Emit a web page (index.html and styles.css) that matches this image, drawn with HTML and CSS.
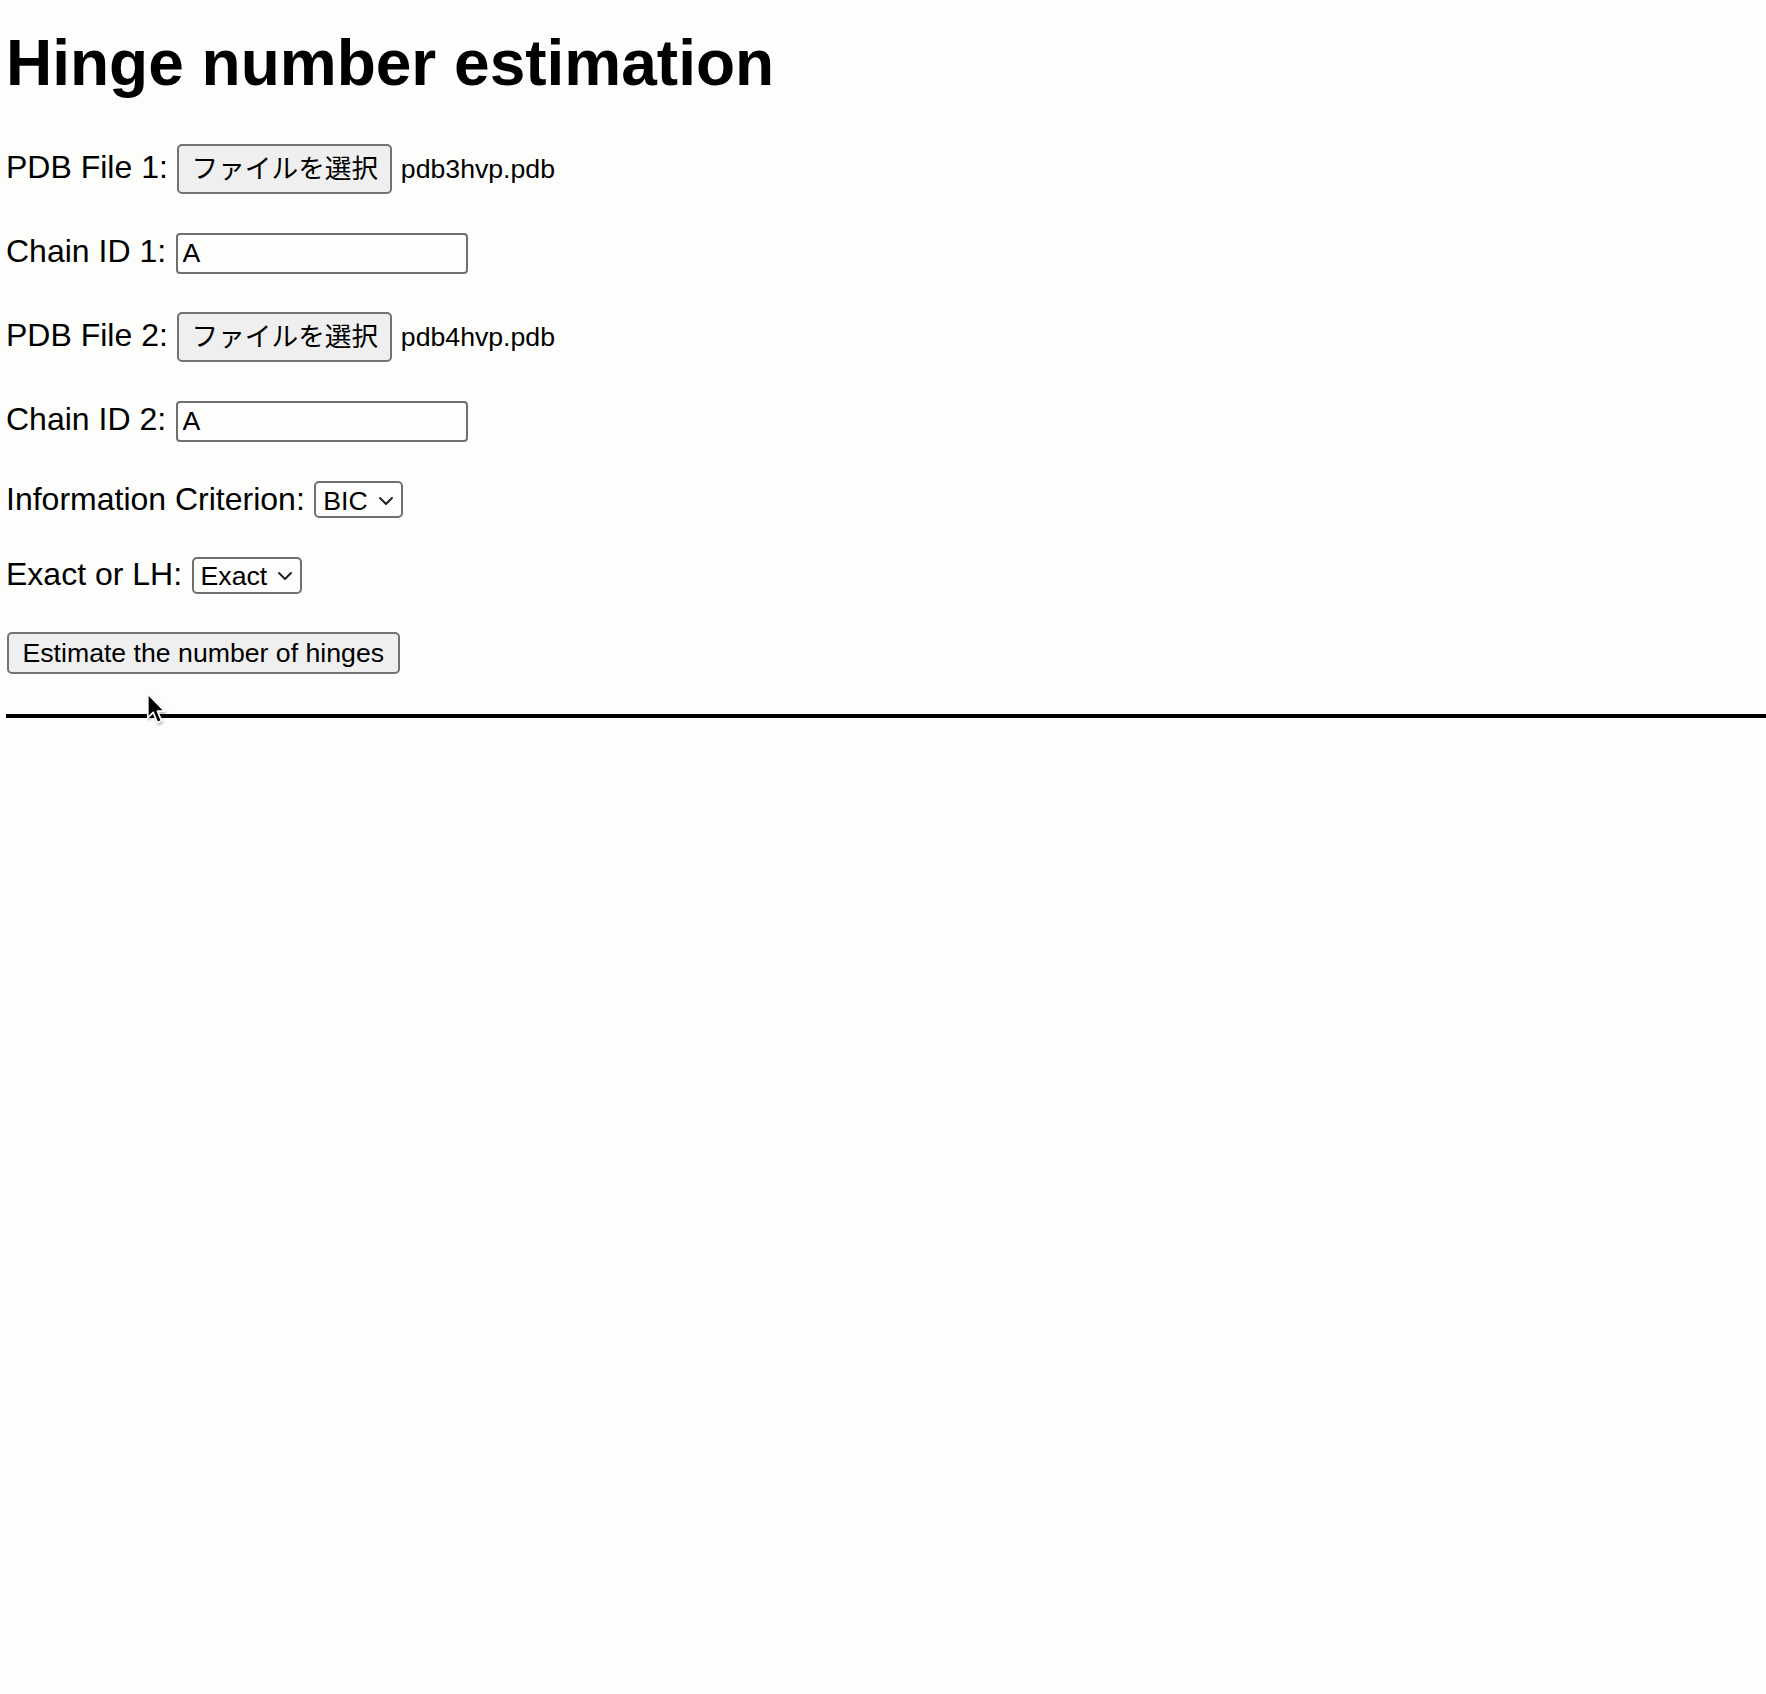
FILE: index.html
```html
<!DOCTYPE html>
<html lang="en">
<head>
<meta charset="utf-8">
<title>Hinge number estimation</title>
<link rel="stylesheet" href="styles.css">
</head>
<body>
<main class="page">
  <h1 class="title">Hinge number estimation</h1>
  <form class="form" onsubmit="return false;">
    <div class="row">
      <label class="label">PDB File 1:</label>
      <button type="button" class="file-btn">ファイルを選択</button>
      <span class="file-name">pdb3hvp.pdb</span>
    </div>
    <div class="row">
      <label class="label" for="chain1">Chain ID 1:</label>
      <input class="text-input" id="chain1" type="text" value="A">
    </div>
    <div class="row">
      <label class="label">PDB File 2:</label>
      <button type="button" class="file-btn">ファイルを選択</button>
      <span class="file-name">pdb4hvp.pdb</span>
    </div>
    <div class="row">
      <label class="label" for="chain2">Chain ID 2:</label>
      <input class="text-input" id="chain2" type="text" value="A">
    </div>
    <div class="row row--select">
      <label class="label">Information Criterion:</label>
      <span class="select"><span class="select-value">BIC</span><svg class="chevron" viewBox="0 0 14 8" width="14" height="8"><polyline points="1,1 7,7 13,1" fill="none" stroke="#1a1a1a" stroke-width="1.8" stroke-linecap="round" stroke-linejoin="round"/></svg></span>
    </div>
    <div class="row row--select">
      <label class="label">Exact or LH:</label>
      <span class="select"><span class="select-value">Exact</span><svg class="chevron" viewBox="0 0 14 8" width="14" height="8"><polyline points="1,1 7,7 13,1" fill="none" stroke="#1a1a1a" stroke-width="1.8" stroke-linecap="round" stroke-linejoin="round"/></svg></span>
    </div>
    <div class="row row--submit">
      <button type="submit" class="submit">Estimate the number of hinges</button>
    </div>
  </form>
  <hr class="rule">
</main>
<svg class="cursor" viewBox="0 0 18 28" width="21.6" height="33.6"><path d="M1.5 1.5 L1.5 21.5 L6 17 L9.5 25.5 L13 24 L9.5 16 L15.5 16 Z" fill="#000" stroke="#fff" stroke-width="1.4" stroke-linejoin="round"/></svg>
</body>
</html>
```

FILE: styles.css
```css
* {
  box-sizing: border-box;
}

html,
body {
  margin: 0;
  padding: 0;
}

body {
  position: relative;
  width: 1766px;
  min-height: 1694px;
  background: #fdfdfb;
  color: #000;
  font-family: "Liberation Sans", Arial, "Noto Sans CJK JP", sans-serif;
}

.page {
  padding: 26px 0 0 6px;
}

.title {
  margin: 0;
  font-size: 64px;
  line-height: 74px;
  font-weight: 700;
}

.form {
  margin: 44px 0 0;
  display: flex;
  flex-direction: column;
  align-items: flex-start;
}

.row {
  display: flex;
  align-items: baseline;
}

.row + .row {
  margin-top: 38.7px;
}

.row + .row--select {
  margin-top: 39.3px;
}

.row + .row--submit {
  margin-top: 38.7px;
}

.label {
  font-size: 32px;
  line-height: 32px;
  margin-right: 9.5px;
}

.file-btn {
  margin: 0;
  width: 215px;
  padding: 8px 0;
  font-family: "Liberation Sans", "Noto Sans CJK JP", sans-serif;
  font-size: 26.67px;
  line-height: 30px;
  color: #000;
  text-align: center;
  background: #efefef;
  border: 2px solid #737373;
  border-radius: 5px;
}

.file-name {
  margin-left: 8.5px;
  font-size: 26.67px;
}

.text-input {
  margin: 0;
  width: 292px;
  height: 41px;
  padding: 0 5px;
  font-family: "Liberation Sans", Arial, sans-serif;
  font-size: 26.67px;
  color: #000;
  background: #fdfdfb;
  border: 2px solid #6f6f6f;
  border-radius: 4px;
  outline: none;
}

.select {
  display: inline-flex;
  align-items: center;
  height: 36.5px;
  padding: 2px 8px 0 7px;
  font-size: 26.67px;
  line-height: 30px;
  border: 2px solid #6f6f6f;
  border-radius: 5px;
  background: #fdfdfb;
}

.chevron {
  margin-left: 11px;
  flex: none;
}

.submit {
  margin: 0 0 0 0.5px;
  height: 41.5px;
  padding: 0 14px;
  font-family: "Liberation Sans", Arial, sans-serif;
  font-size: 26.67px;
  line-height: 37px;
  color: #000;
  background: #efefef;
  border: 2px solid #737373;
  border-radius: 5px;
}

.rule {
  margin: 40.4px 0 0;
  height: 4px;
  border: 0;
  background: #000;
}

.cursor {
  position: absolute;
  left: 146px;
  top: 692px;
  filter: drop-shadow(1px 2px 1px rgba(0, 0, 0, 0.25));
}
```
